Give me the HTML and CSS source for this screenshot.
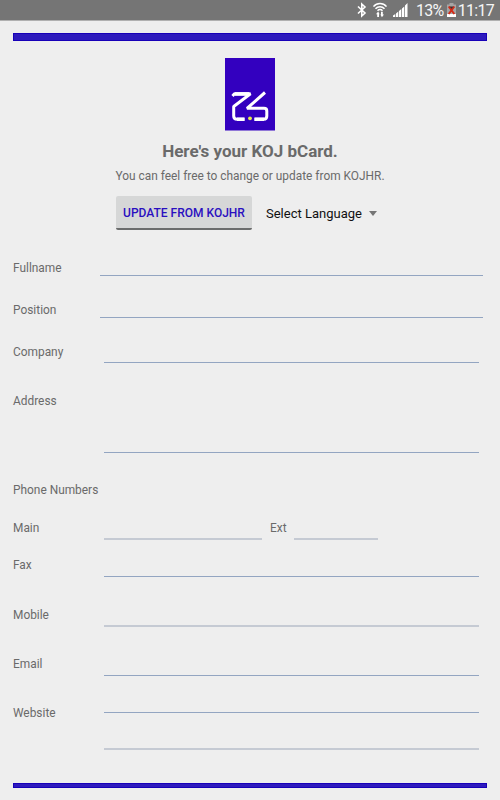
FILE: index.html
```html
<!DOCTYPE html>
<html lang="en">
<head>
    <meta charset="UTF-8">
    <title>KOJ bCard</title>
    <link rel="stylesheet" href="styles.css">
</head>
<body>
    <div class="status-bar">
        <svg class="icon-bluetooth" width="10" height="16" viewBox="0 0 10 16">
            <path d="M1 4.5 8 11 4.8 14V2L8 5 1 11.5" fill="none" stroke="#fff" stroke-width="1.6"/>
        </svg>
        <svg class="icon-wifi" width="14" height="16" viewBox="0 0 14 16">
            <g fill="none" stroke="#fff" stroke-width="1.5">
                <path d="M.5 4.600C4 .4 10 .4 13.500 4.600"/>
                <path d="M2.500 6.800C5 3.900 9 3.900 11.500 6.800"/>
                <path d="M4.500 8.800C6 7.200 8 7.200 9.500 8.800"/>
            </g>
            <path d="M3 12.200 5.200 9.500 6.600 12.200H6V15H4.200V12.200ZM7.400 12.500H8V9.800H9.800V12.500H11L8.900 15.300Z" fill="#fff"/>
        </svg>
        <svg class="icon-signal" width="15" height="14" viewBox="0 0 15 14">
            <path d="M0 14V12.400L2.300 11V14ZM3 14V10.500L5.300 8.500V14ZM6 14V8L8.300 6V14ZM9 14V5.500L11.300 3.500V14ZM12 14V2.500L14.500 0V14Z" fill="#fff"/>
        </svg>
        <span class="battery-level">13%</span>
        <svg class="icon-battery" width="9" height="14" viewBox="0 0 9 14">
            <path d="M2.500 0H6.500V1.500H9V14H0V1.500H2.500Z" fill="#a5a5a5"/>
            <path d="M0 11H9V14H0Z" fill="#fff"/>
            <path d="M1.700 3.500 7.300 11M7.300 3.500 1.700 11" stroke="#d42a16" stroke-width="2"/>
            <path d="M2.500 3.500H6.500L4.500 6Z" fill="#432b28"/>
        </svg>
        <span class="clock">11:17</span>
    </div>

    <div class="container">
        <div class="divider"></div>

        <div class="header">
            <svg class="logo" width="50" height="73" viewBox="0 0 50 73">
                <rect width="50" height="72.500" fill="#3300bf"/>
                <g fill="none" stroke="#fff" stroke-linejoin="bevel">
                    <path d="M7.500 38 9.500 35.800H25.500L8.700 48.500V58Q8.700 61.200 12 61.200H19.500" stroke-width="3"/>
                    <path d="M40 34.500 22 50.300H39Q41.800 50.300 41.800 53V58Q41.800 61.200 38.800 61.200H29.500" stroke-width="3"/>
                    <path d="M10 36H24" stroke-width="3.600"/>
                    <path d="M12 61.200H19.500M29.500 61.200H39" stroke-width="3.600"/>
                </g>
                <circle cx="25" cy="60.300" r="1.900" fill="#e4ec4a"/>
            </svg>
            <h1>Here's your KOJ bCard.</h1>
            <p>You can feel free to change or update from KOJHR.</p>
            <div class="controls">
                <button class="btn">UPDATE FROM KOJHR</button>
                <div class="language-select">
                    <span>Select Language</span>
                    <span class="arrow"></span>
                </div>
            </div>
        </div>

        <form class="card-form">
            <div class="row row-wide">
                <label for="fullname">Fullname</label>
                <input type="text" id="fullname" class="field">
            </div>
            <div class="row row-wide">
                <label for="position">Position</label>
                <input type="text" id="position" class="field">
            </div>
            <div class="row row-company">
                <label for="company">Company</label>
                <input type="text" id="company" class="field">
            </div>
            <div class="row row-address">
                <label for="address">Address</label>
                <input type="text" id="address" class="field">
            </div>
            <div class="row row-title">
                <span>Phone Numbers</span>
            </div>
            <div class="row row-main">
                <label for="main">Main</label>
                <input type="text" id="main" class="field field-soft field-main">
                <label for="ext" class="label-ext">Ext</label>
                <input type="text" id="ext" class="field field-soft field-ext">
            </div>
            <div class="row row-fax">
                <label for="fax">Fax</label>
                <input type="text" id="fax" class="field">
            </div>
            <div class="row">
                <label for="mobile">Mobile</label>
                <input type="text" id="mobile" class="field field-soft">
            </div>
            <div class="row">
                <label for="email">Email</label>
                <input type="text" id="email" class="field">
            </div>
            <div class="row row-website">
                <label for="website">Website</label>
                <div class="field-stack">
                    <input type="text" id="website" class="field">
                    <input type="text" class="field field-soft field-extra">
                </div>
            </div>
        </form>

        <div class="divider divider-bottom"></div>
    </div>
</body>
</html>
```

FILE: styles.css
```css
:root {
    --primary-color: #2e1bbd;
    --primary-edge: #1700b8;
    --text-color: #6a6a6a;
    --line-color: #93a5c1;
}

* {
    box-sizing: border-box;
}

body {
    font-family: Roboto, sans-serif;
    margin: 0;
    height: 800px;
    overflow: hidden;
    background: #eeeeee;
    color: var(--text-color);
}

/* Status bar */
.status-bar {
    display: flex;
    justify-content: flex-end;
    align-items: center;
    height: 21px;
    padding-right: 6px;
    background: #757575;
    border-bottom: 1px solid #b0b0b0;
    color: #f5f5f5;
    font-size: 16px;
    line-height: 20px;
}

.icon-wifi {
    margin-left: 6px;
}

.icon-signal {
    margin-left: 6px;
}

.battery-level {
    margin-left: 8px;
    padding-top: 2px;
    letter-spacing: -0.7px;
}

.icon-battery {
    margin-left: 3px;
}

.clock {
    margin-left: 2px;
    padding-top: 2px;
    letter-spacing: -0.7px;
}

.container {
    padding: 12px 13px 0;
}

.divider {
    height: 8px;
    background: var(--primary-color);
    border: 1px solid var(--primary-edge);
}

.divider-bottom {
    height: 5px;
    margin-top: 33px;
}

/* Header */
.header {
    display: flex;
    flex-direction: column;
    align-items: center;
    height: 219px;
    padding-top: 17px;
}

.header h1 {
    margin: 9px 0 0;
    font-size: 17px;
    line-height: 22px;
    font-weight: 700;
}

.header p {
    margin: 6px 0 0;
    font-size: 11.9px;
    line-height: 16px;
}

.controls {
    display: flex;
    align-items: center;
    align-self: flex-start;
    margin: 12px 0 0 103px;
}

.btn {
    width: 136px;
    height: 34px;
    padding: 2px 0 0;
    border: none;
    border-bottom: 2px solid #6b6c6c;
    border-radius: 2px;
    background: #d6d7d7;
    color: #2a0fc0;
    font-family: inherit;
    font-size: 12px;
    font-weight: 500;
}

.language-select {
    display: flex;
    align-items: center;
    margin-left: 14px;
    color: #111111;
    font-size: 13px;
}

.arrow {
    margin-left: 7px;
    border: 4px solid transparent;
    border-top: 5px solid #757575;
    border-bottom: none;
}

/* Form */
.row {
    display: flex;
    height: 20px;
    margin-bottom: 29px;
    padding-right: 8px;
    font-size: 11.9px;
    line-height: 16px;
}

.row label {
    width: 91px;
    flex: none;
}

.row-wide {
    height: 16px;
    margin-bottom: 26px;
    padding-right: 4px;
}

.row-wide label {
    width: 87px;
}

.row-company {
    height: 19px;
    margin-bottom: 30px;
}

.row-address {
    height: 60px;
}

.row-title {
    height: 16px;
    margin-bottom: 22px;
}

.row-main {
    margin-bottom: 17px;
}

.row-fax {
    margin-bottom: 30px;
}

.row-website {
    height: 45px;
    margin-bottom: 0;
}

.field {
    flex: 1;
    min-width: 0;
    height: 100%;
    padding: 0;
    border: none;
    border-bottom: 1px solid var(--line-color);
    background: transparent;
    font: inherit;
    outline: none;
}

.field-soft {
    border-bottom: 2px solid #c5cad3;
}

.row .field-main {
    flex: none;
    width: 158px;
}

.row .label-ext {
    width: 24px;
    margin-left: 8px;
}

.row .field-ext {
    flex: none;
    width: 84px;
}

.field-stack {
    display: flex;
    flex-direction: column;
    flex: 1;
}

.field-stack .field {
    flex: none;
    height: 8px;
}

.field-stack .field-extra {
    height: 37px;
}
```
